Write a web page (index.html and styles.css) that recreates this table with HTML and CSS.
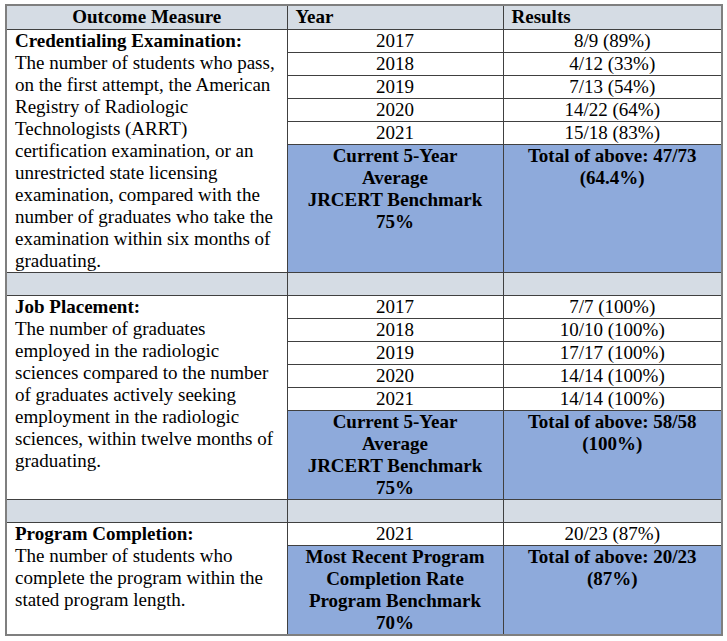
FILE: index.html
```html
<!DOCTYPE html>
<html>
<head>
<meta charset="utf-8">
<link rel="stylesheet" href="styles.css">
</head>
<body>
<table class="outcomes">
  <colgroup>
    <col class="c-measure">
    <col class="c-year">
    <col class="c-result">
  </colgroup>
  <tr class="head">
    <th class="h-measure">Outcome Measure</th>
    <th class="h-left">Year</th>
    <th class="h-left">Results</th>
  </tr>
  <tr class="yr">
    <td class="desc" rowspan="6"><b>Credentialing Examination:</b><br>The number of students who pass, on the first attempt, the American Registry of Radiologic Technologists (ARRT) certification examination, or an unrestricted state licensing examination, compared with the number of graduates who take the examination within six months of graduating.</td>
    <td class="mid">2017</td><td class="mid">8/9 (89%)</td>
  </tr>
  <tr class="yr"><td class="mid">2018</td><td class="mid">4/12 (33%)</td></tr>
  <tr class="yr"><td class="mid">2019</td><td class="mid">7/13 (54%)</td></tr>
  <tr class="yr"><td class="mid">2020</td><td class="mid">14/22 (64%)</td></tr>
  <tr class="yr"><td class="mid">2021</td><td class="mid">15/18 (83%)</td></tr>
  <tr class="sum sum-a">
    <td class="blue">Current 5-Year<br>Average<br>JRCERT Benchmark<br>75%</td>
    <td class="blue">Total of above: 47/73<br>(64.4%)</td>
  </tr>
  <tr class="gap"><td></td><td></td><td></td></tr>
  <tr class="yr">
    <td class="desc" rowspan="6"><b>Job Placement:</b><br>The number of graduates employed in the radiologic sciences compared to the number of graduates actively seeking employment in the radiologic sciences, within twelve months of graduating.</td>
    <td class="mid">2017</td><td class="mid">7/7 (100%)</td>
  </tr>
  <tr class="yr"><td class="mid">2018</td><td class="mid">10/10 (100%)</td></tr>
  <tr class="yr"><td class="mid">2019</td><td class="mid">17/17 (100%)</td></tr>
  <tr class="yr"><td class="mid">2020</td><td class="mid">14/14 (100%)</td></tr>
  <tr class="yr"><td class="mid">2021</td><td class="mid">14/14 (100%)</td></tr>
  <tr class="sum sum-b">
    <td class="blue">Current 5-Year<br>Average<br>JRCERT Benchmark<br>75%</td>
    <td class="blue">Total of above: 58/58<br>(100%)</td>
  </tr>
  <tr class="gap"><td></td><td></td><td></td></tr>
  <tr class="yr">
    <td class="desc" rowspan="2"><b>Program Completion:</b><br>The number of students who complete the program within the stated program length.</td>
    <td class="mid">2021</td><td class="mid">20/23 (87%)</td>
  </tr>
  <tr class="sum sum-c">
    <td class="blue">Most Recent Program<br>Completion Rate<br>Program Benchmark<br>70%</td>
    <td class="blue">Total of above: 20/23<br>(87%)</td>
  </tr>
</table>
</body>
</html>
```

FILE: styles.css
```css
html, body {
  background: #ffffff;
}
body {
  margin: 4px 0 0 5px;
  font-family: "Liberation Serif", "Times New Roman", serif;
  font-size: 19px;
  line-height: 22px;
  color: #000;
}
.outcomes {
  border-collapse: collapse;
  border: 2px solid #7f7f7f;
  table-layout: fixed;
  width: 716px;
}
.c-measure { width: 281px; }
.c-year { width: 216px; }
.c-result { width: 219px; }

.outcomes th,
.outcomes td {
  border: 1px solid #404040;
  padding: 0 8px;
  vertical-align: top;
}
.head th {
  background: #d5dce4;
  height: 23px;
  font-weight: bold;
}
.h-measure { text-align: center; }
.h-left { text-align: left; }

.yr td { height: 22px; }
.mid { text-align: center; }
.desc { text-align: left; }

.blue {
  background: #8eaadb;
  font-weight: bold;
  text-align: center;
}
.sum-a td { height: 127px; }
.sum-b td { height: 88px; }
.sum-c td { height: 87px; }

.gap td {
  background: #d5dce4;
  height: 22px;
}
```
